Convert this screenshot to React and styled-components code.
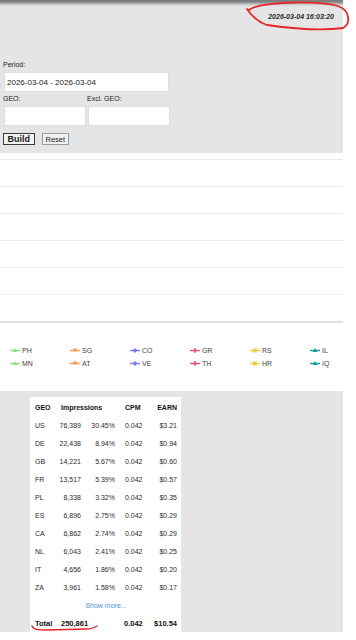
import React from "react";
import styled, { createGlobalStyle } from "styled-components";

const GlobalStyle = createGlobalStyle`
  html, body { margin: 0; padding: 0; background: #fff; }
  body { font-family: "Liberation Sans", Arial, sans-serif; color: #222; }
  * { box-sizing: border-box; }
`;

const Page = styled.div`
  width: 343px;
`;

const Header = styled.header`
  position: relative;
  background: #e5e5e5;
  padding-bottom: 8px;
`;

const TopBar = styled.div`
  height: 6px;
  background: linear-gradient(#7a7a7a 0, #858585 2px, #bdbdbd 4px, #e5e5e5 6px);
`;

const StampRow = styled.div`
  height: 20px;
  display: flex;
  justify-content: flex-end;
  align-items: center;
  padding-right: 9px;
  font-size: 7px;
  font-weight: bold;
  font-style: italic;
  color: #2a2a2a;
`;

const Annotation = styled.svg`
  position: absolute;
  left: ${(p) => p.$left || 0}px;
  top: ${(p) => p.$top || 0}px;
  pointer-events: none;
  overflow: visible;
`;

const Form = styled.form`
  padding: 34px 0 0 3px;
  display: flex;
  flex-direction: column;
  gap: 2px;
`;

const Field = styled.div`
  display: flex;
  flex-direction: column;
  gap: 2px;
`;

const Label = styled.label`
  font-size: 7px;
  line-height: 10px;
  height: 10px;
  color: #222;
`;

const TextInput = styled.input`
  width: ${(p) => p.$w}px;
  height: 20px;
  margin: 0 0 0 1px;
  border: 1px solid #dedede;
  background: #fff;
  padding: 0 0 0 2px;
  font-family: "Liberation Sans", Arial, sans-serif;
  font-size: 8px;
  color: #1a1a1a;
  outline: none;
`;

const FieldRow = styled.div`
  display: grid;
  grid-template-columns: 82px 82px;
  column-gap: 2px;
`;

const Buttons = styled.div`
  display: flex;
  gap: 7px;
  margin-top: 5px;
`;

const Button = styled.button`
  height: 12px;
  margin: 0;
  display: inline-flex;
  align-items: center;
  padding: 0 ${(p) => (p.$primary ? 3.5 : 3)}px;
  border: 1px solid ${(p) => (p.$primary ? "#3c3c3c" : "#9a9a9a")};
  background: #f1f1f1;
  font-family: "Liberation Sans", Arial, sans-serif;
  font-size: ${(p) => (p.$primary ? 9 : 7.5)}px;
  font-weight: ${(p) => (p.$primary ? "bold" : "normal")};
  color: #1a1a1a;
  border-radius: 0;
`;

const ChartArea = styled.section`
  height: 238px;
  background: #fff;
`;

const ChartSvg = styled.svg`
  display: block;
`;

const Legend = styled.div`
  margin-top: 19px;
  padding-left: 10px;
  display: grid;
  grid-template-columns: repeat(6, 60px);
  grid-auto-rows: 13px;
`;

const LegendItem = styled.div`
  display: flex;
  align-items: center;
  gap: 2px;
  font-size: 7px;
  color: #444;
`;

const Stats = styled.section`
  background: #e5e5e5;
  padding: 6px 0 0 30px;
`;

const Card = styled.div`
  position: relative;
  width: 151px;
  background: #fff;
  padding: 1px 4px 0 5px;
`;

const Table = styled.table`
  border-collapse: collapse;
  table-layout: fixed;
  width: 142px;
  font-size: 7px;
  color: #2a2a2a;
`;

const Col = styled.col`
  width: ${(p) => p.$w}px;
`;

const Cell = styled.td`
  height: 18px;
  padding: 0 0 0 ${(p) => p.$pl || 0}px;
  text-align: ${(p) => p.$align || "left"};
  white-space: nowrap;
  font-weight: ${(p) => (p.$bold ? "bold" : "normal")};
  font-size: ${(p) => (p.$big ? 7.5 : 7)}px;
  color: ${(p) => (p.$bold ? "#111" : "#2a2a2a")};
  vertical-align: middle;
`;

const HeadCell = styled.th`
  height: 18px;
  padding: 0 0 0 ${(p) => p.$pl || 0}px;
  text-align: ${(p) => p.$align || "left"};
  font-weight: bold;
  color: #111;
  white-space: nowrap;
  vertical-align: middle;
`;

const MoreLink = styled.a`
  color: #4a8fd6;
  text-decoration: none;
  font-size: 7px;
`;

const rows = [
  ["US", "76,389", "30.45%", "0.042", "$3.21"],
  ["DE", "22,438", "8.94%", "0.042", "$0.94"],
  ["GB", "14,221", "5.67%", "0.042", "$0.60"],
  ["FR", "13,517", "5.39%", "0.042", "$0.57"],
  ["PL", "8,338", "3.32%", "0.042", "$0.35"],
  ["ES", "6,896", "2.75%", "0.042", "$0.29"],
  ["CA", "6,862", "2.74%", "0.042", "$0.29"],
  ["NL", "6,043", "2.41%", "0.042", "$0.25"],
  ["IT", "4,656", "1.86%", "0.042", "$0.20"],
  ["ZA", "3,961", "1.58%", "0.042", "$0.17"],
];

const series = [
  { name: "PH", color: "#8fe08a", sym: "tri" },
  { name: "SG", color: "#fb9d5b", sym: "tee" },
  { name: "CO", color: "#7b7bef", sym: "diamond" },
  { name: "GR", color: "#f0517c", sym: "plus" },
  { name: "RS", color: "#e6d24e", sym: "rect" },
  { name: "IL", color: "#1f9a9c", sym: "tri" },
  { name: "MN", color: "#8fe08a", sym: "tri" },
  { name: "AT", color: "#fb9d5b", sym: "tee" },
  { name: "VE", color: "#7b7bef", sym: "diamond" },
  { name: "TH", color: "#f0517c", sym: "plus" },
  { name: "HR", color: "#e6d24e", sym: "rect" },
  { name: "IQ", color: "#1f9a9c", sym: "tri" },
];

function Marker({ color, sym }) {
  let shape;
  if (sym === "tri") shape = <polygon points="5,1 7.5,5 2.5,5" fill={color} />;
  else if (sym === "tee") shape = <rect x="3" y="1.5" width="4" height="3" fill={color} />;
  else if (sym === "diamond") shape = <polygon points="5,1 7.5,3.5 5,6 2.5,3.5" fill={color} />;
  else if (sym === "plus")
    shape = (
      <g fill={color}>
        <rect x="4.2" y="1.2" width="1.6" height="4.6" />
        <circle cx="5" cy="3.5" r="1.6" />
      </g>
    );
  else shape = <rect x="2.8" y="1.5" width="4.4" height="4" fill={color} />;
  return (
    <svg width="10" height="7" viewBox="0 0 10 7">
      <line x1="0" y1="3.5" x2="10" y2="3.5" stroke={color} strokeWidth="1.4" />
      {shape}
    </svg>
  );
}

function GridChart() {
  const ys = [6.5, 33.5, 60.5, 87.5, 114.5, 141.5];
  return (
    <ChartSvg width="343" height="172" viewBox="0 0 343 172">
      {ys.map((y) => (
        <line key={y} x1="0" x2="343" y1={y} y2={y} stroke="#ebebeb" strokeWidth="1" />
      ))}
      <line x1="0" x2="343" y1="169" y2="169" stroke="#d4d4dc" strokeWidth="1.6" />
    </ChartSvg>
  );
}

export default function App() {
  return (
    <Page>
      <GlobalStyle />
      <Header>
        <TopBar />
        <StampRow>2026-03-04 16:03:20</StampRow>
        <Form onSubmit={(e) => e.preventDefault()}>
          <Field>
            <Label>Period:</Label>
            <TextInput $w={165} readOnly defaultValue="2026-03-04 - 2026-03-04" />
          </Field>
          <FieldRow>
            <Field>
              <Label>GEO:</Label>
              <TextInput $w={82} />
            </Field>
            <Field>
              <Label>Excl. GEO:</Label>
              <TextInput $w={82} />
            </Field>
          </FieldRow>
          <Buttons>
            <Button $primary type="submit">Build</Button>
            <Button type="button">Reset</Button>
          </Buttons>
        </Form>
        <Annotation width="356" height="40">
          <path
            d="M 249 10 C 258 2, 315 0, 338 6 C 350 10, 351 24, 343 28 C 322 31, 288 28, 267 25 C 258 22, 251 15, 247 9"
            fill="none"
            stroke="#e3262b"
            strokeWidth="1.8"
            strokeLinecap="round"
          />
        </Annotation>
      </Header>

      <ChartArea>
        <GridChart />
        <Legend>
          {series.map((s) => (
            <LegendItem key={s.name}>
              <Marker color={s.color} sym={s.sym} />
              {s.name}
            </LegendItem>
          ))}
        </Legend>
      </ChartArea>

      <Stats>
        <Card>
          <Table>
            <colgroup>
              <Col $w={23} />
              <Col $w={23} />
              <Col $w={34} />
              <Col $w={32} />
              <Col $w={30} />
            </colgroup>
            <thead>
              <tr>
                <HeadCell>GEO</HeadCell>
                <HeadCell colSpan={2} $pl={3}>Impressions</HeadCell>
                <HeadCell $pl={10}>CPM</HeadCell>
                <HeadCell $align="right">EARN</HeadCell>
              </tr>
            </thead>
            <tbody>
              {rows.map((r) => (
                <tr key={r[0]}>
                  <Cell>{r[0]}</Cell>
                  <Cell $align="right">{r[1]}</Cell>
                  <Cell $align="right">{r[2]}</Cell>
                  <Cell $pl={10}>{r[3]}</Cell>
                  <Cell $align="right">{r[4]}</Cell>
                </tr>
              ))}
              <tr>
                <Cell colSpan={5} $align="center">
                  <MoreLink href="#">Show more...</MoreLink>
                </Cell>
              </tr>
              <tr>
                <Cell $bold $big>Total</Cell>
                <Cell $bold $big colSpan={2} $pl={3}>250,861</Cell>
                <Cell $bold $big $pl={9}>0.042</Cell>
                <Cell $bold $big $align="right">$10.54</Cell>
              </tr>
            </tbody>
          </Table>
          <Annotation width="151" height="240" $left={-30} $top={0}>
            <path
              d="M 32 229 C 33 232, 36 233, 46 233 L 86 232 C 91 232, 94 231, 97 229"
              fill="none"
              stroke="#e3262b"
              strokeWidth="1.5"
              strokeLinecap="round"
            />
          </Annotation>
        </Card>
      </Stats>
    </Page>
  );
}
